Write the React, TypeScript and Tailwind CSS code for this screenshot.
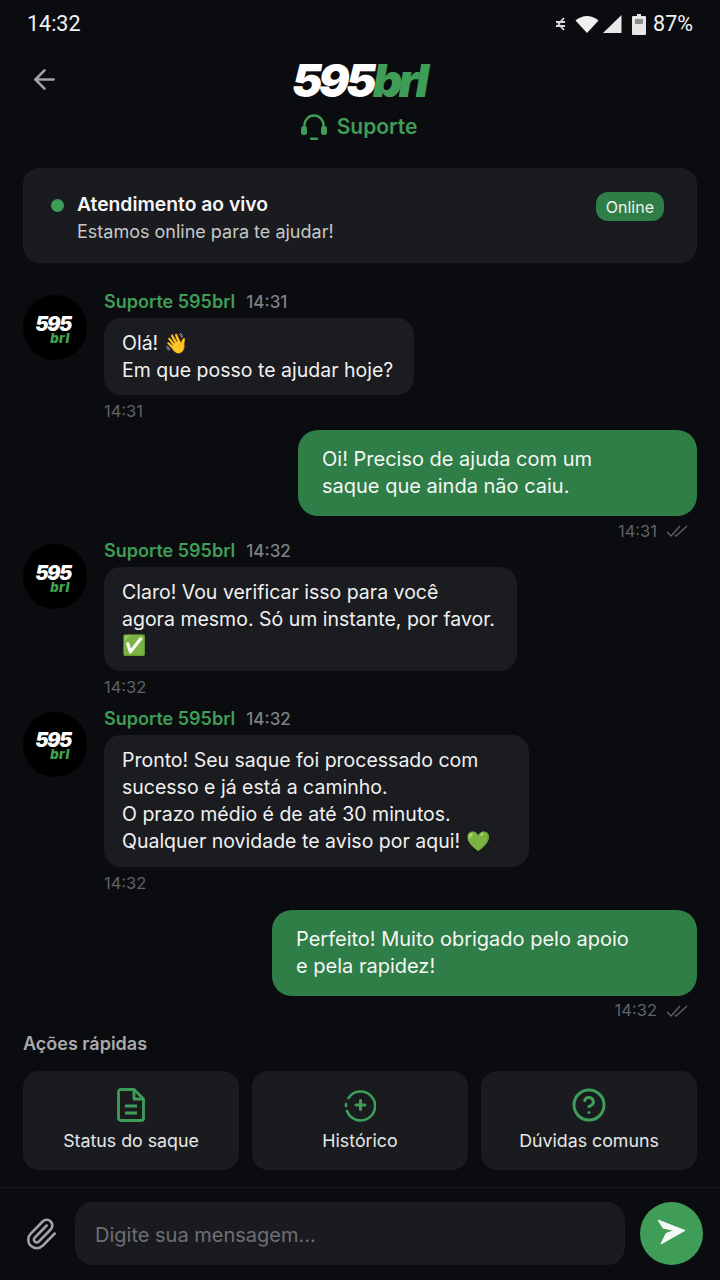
import { ArrowLeft, CircleHelp, Paperclip } from 'lucide-react';
import type { ReactNode } from 'react';

function StatusIcons() {
  return (
    <div className="flex items-center">
      <svg width="12" height="16" viewBox="0 0 12 16" className="mr-[8px]" fill="none" stroke="#d8d8d8" strokeWidth="1.8">
        <path d="M9 2 3.500 8 9 14M1 6h9M1 10h9" />
      </svg>
      <svg width="24" height="18" viewBox="0 0 24 18" className="mr-[3px]" fill="#efefef">
        <path d="M0.500 5.500C4 2.500 8 1 12 1S20 2.500 23.500 5.500L12 18Z" />
      </svg>
      <svg width="20" height="18" viewBox="0 0 20 18" className="mr-[10px]" fill="#e8e8e8">
        <path d="M19.500 0V18H1Z" />
      </svg>
      <svg width="14" height="21" viewBox="0 0 14 21" className="mr-[7px]">
        <path d="M5 0h4v2h4a1 1 0 0 1 1 1v17a1 1 0 0 1-1 1H1a1 1 0 0 1-1-1V3a1 1 0 0 1 1-1h4Z" fill="#e6e6e6" />
        <rect x="3" y="5" width="8" height="5" fill="#8d8d8d" />
      </svg>
    </div>
  );
}

function HeadsetIcon() {
  return (
    <svg width="28" height="27" viewBox="0 0 28 27" fill="#3f9d58">
      <path d="M4.500 13V11a9.500 9.500 0 0 1 19 0v2" fill="none" stroke="#3f9d58" strokeWidth="2.400" />
      <rect x="1" y="12" width="6" height="9" rx="2.500" />
      <rect x="21" y="12" width="6" height="9" rx="2.500" />
      <rect x="10" y="23.500" width="8" height="2.500" rx="1" />
    </svg>
  );
}

function DoubleCheck() {
  return (
    <svg width="24" height="14" viewBox="0 0 24 14" fill="none" stroke="#5d5f63" strokeWidth="1.5">
      <path d="M1 8l4 4 9-10M9 11l1 1 11-10" />
    </svg>
  );
}

function FileIcon() {
  return (
    <svg width="28" height="34" viewBox="0 0 28 34" fill="none" stroke="#3f9d58" strokeWidth="2.800" strokeLinejoin="round">
      <path d="M4 1.500h13L26.500 11v19a2.500 2.500 0 0 1-2.500 2.500H4A2.500 2.500 0 0 1 1.500 30V4A2.500 2.500 0 0 1 4 1.500Z" />
      <path d="M17 1.500V11h9.500" />
      <path d="M8 18h12M8 25h12" />
    </svg>
  );
}

function HistoryIcon() {
  return (
    <svg width="32" height="34" viewBox="0 0 32 34" fill="none" stroke="#3f9d58" strokeWidth="2.600" strokeLinecap="round">
      <path d="M4.500 10A14.500 14.500 0 1 1 3 23" />
      <path d="M2 16v2" />
      <path d="M16.500 12.500v9M12 17h9" strokeWidth="3" />
    </svg>
  );
}

function SendIcon() {
  return (
    <svg width="36" height="36" viewBox="0 0 36 36" fill="#f4f8f5">
      <path d="M4 4 31 14.500 7 28 12 17.500 20 14.500 9 12Z" stroke="#f4f8f5" strokeWidth="1" strokeLinejoin="round" />
    </svg>
  );
}

function BotAvatar() {
  return (
    <div className="flex h-[65px] w-[64px] shrink-0 flex-col items-center justify-center rounded-full bg-black pt-[3px] pr-[4px] italic">
      <span className="text-[20px] leading-[17px] font-black tracking-[-1.500px] text-white">595</span>
      <span className="ml-[14px] text-[13px] leading-[10px] font-black tracking-[0.500px] text-[#3da34f]">brl</span>
    </div>
  );
}

function BotMessage({ time, width, children }: { time: string; width: string; children: ReactNode }) {
  return (
    <div className="flex gap-[17px]">
      <div className="pt-[2px]">
        <BotAvatar />
      </div>
      <div className="flex flex-col items-start">
        <div className="flex h-[18px] items-center gap-[11px] leading-[16px]">
          <span className="text-[18px] font-semibold text-[#3f9d58]">Suporte 595brl</span>
          <span className="text-[17px] font-medium text-[#7e8084]">{time}</span>
        </div>
        <div className={`mt-[7px] rounded-[17px] bg-[#1b1c20] pt-[12px] pr-[10px] pb-[12px] pl-[18px] text-[19.500px] leading-[26.500px] whitespace-nowrap text-[#f0f0f0] ${width}`}>
          {children}
        </div>
        <span className="mt-[6px] text-[16.500px] leading-[20px] text-[#606266]">{time}</span>
      </div>
    </div>
  );
}

function UserMessage({ time, width, children }: { time: string; width: string; children: ReactNode }) {
  return (
    <div className="flex flex-col items-end">
      <div className={`rounded-[20px] bg-[#2f7d47] pt-[16px] pb-[16px] pl-[24px] text-[20px] leading-[27px] whitespace-nowrap text-[#f4f7f4] ${width}`}>
        {children}
      </div>
      <div className="mt-[6px] mr-[7px] flex h-[18px] items-center gap-[9px] text-[16.500px] text-[#606266]">
        <span>{time}</span>
        <DoubleCheck />
      </div>
    </div>
  );
}

function QuickAction({ icon, label }: { icon: ReactNode; label: string }) {
  return (
    <div className="flex h-[99px] flex-col items-center rounded-[16px] bg-[#1a1b1f] pt-[17px]">
      <div className="flex h-[34px] items-center justify-center">{icon}</div>
      <span className="mt-[8px] text-[17.800px] leading-[22px] text-[#e8e8e8]">{label}</span>
    </div>
  );
}

export default function App() {
  return (
    <div className="flex h-[1280px] w-[720px] flex-col overflow-hidden bg-[#0b0c0f] font-['Inter',sans-serif]">
      {/* Status bar */}
      <div className="flex h-[47px] shrink-0 items-center justify-between pt-[1px] pr-[27px] pl-[27px] font-['Roboto',sans-serif] text-[21.500px] text-[#f2f2f2]">
        <span>14:32</span>
        <div className="flex items-center">
          <StatusIcons />
          <span>87%</span>
        </div>
      </div>

      {/* Header */}
      <header className="relative flex h-[99px] shrink-0 flex-col items-center border-b border-[#101114] pt-[11px]">
        <ArrowLeft className="absolute top-[17px] left-[29px] h-[31px] w-[31px] text-[#a2a3a5]" strokeWidth={2} />
        <div className="-ml-[3px] text-[46px] leading-[44px] font-black tracking-[-3.800px] italic">
          <span className="text-white">595</span>
          <span className="text-[#3f9d58]">brl</span>
        </div>
        <div className="mt-[11px] -ml-[3px] flex items-center gap-[9px] text-[#3f9d58]">
          <HeadsetIcon />
          <span className="text-[21px] leading-[28px] font-semibold">Suporte</span>
        </div>
      </header>

      {/* Chat */}
      <main className="flex min-h-0 flex-1 flex-col px-[23px] pt-[22px]">
        <div className="flex h-[95px] shrink-0 items-start justify-between rounded-[16px] bg-[#1a1b1f] pt-[24px] pr-[33px] pl-[28px]">
          <div className="flex items-start gap-[13px]">
            <span className="mt-[7px] h-[13px] w-[13px] rounded-full bg-[#3f9d58]" />
            <div className="flex flex-col">
              <span className="text-[19.300px] leading-[25px] font-semibold text-[#f5f5f5]">Atendimento ao vivo</span>
              <span className="mt-[2px] text-[18px] leading-[25px] text-[#c6c7c9]">Estamos online para te ajudar!</span>
            </div>
          </div>
          <span className="flex h-[29px] items-center rounded-[12px] bg-[#2f7d47] px-[10px] text-[16px] text-[#eef4ef]">Online</span>
        </div>

        <div className="mt-[30px] flex flex-col">
          <BotMessage time="14:31" width="w-[310px]">
            Olá! 👋
            <br />
            Em que posso te ajudar hoje?
          </BotMessage>
          <div className="mt-[9px]">
            <UserMessage time="14:31" width="w-[399px]">
              Oi! Preciso de ajuda com um
              <br />
              saque que ainda não caiu.
            </UserMessage>
          </div>
          <div className="mt-[2px]">
            <BotMessage time="14:32" width="w-[413px]">
              Claro! Vou verificar isso para você
              <br />
              agora mesmo. Só um instante, por favor.
              <br />
              ✅
            </BotMessage>
          </div>
          <div className="mt-[13px]">
            <BotMessage time="14:32" width="w-[425px]">
              <div className="leading-[27px]">
                Pronto! Seu saque foi processado com
                <br />
                sucesso e já está a caminho.
                <br />
                O prazo médio é de até 30 minutos.
                <br />
                Qualquer novidade te aviso por aqui! 💚
              </div>
            </BotMessage>
          </div>
          <div className="mt-[17px]">
            <UserMessage time="14:32" width="w-[425px]">
              Perfeito! Muito obrigado pelo apoio
              <br />
              e pela rapidez!
            </UserMessage>
          </div>
        </div>

        <div className="mt-[12px]">
          <h2 className="text-[18px] leading-[24px] font-semibold text-[#a9aaac]">Ações rápidas</h2>
          <div className="mt-[15px] grid grid-cols-3 gap-[13px]">
            <QuickAction icon={<FileIcon />} label="Status do saque" />
            <QuickAction icon={<HistoryIcon />} label="Histórico" />
            <QuickAction icon={<CircleHelp className="h-[36px] w-[36px] text-[#3f9d58]" strokeWidth={2} />} label="Dúvidas comuns" />
          </div>
        </div>
      </main>

      {/* Input */}
      <footer className="flex h-[93px] shrink-0 items-start border-t border-[#16171a] pt-[14px] pr-[17px] pl-[23px]">
        <div className="flex h-[63px] w-[36px] items-center justify-center">
          <Paperclip className="h-[34px] w-[34px] text-[#a2a3a5]" strokeWidth={1.800} />
        </div>
        <div className="ml-[16px] flex h-[63px] flex-1 items-center rounded-[18px] bg-[#1a1b1f] pt-[2px] pl-[20px] text-[20px] text-[#6e7074]">
          Digite sua mensagem...
        </div>
        <div className="ml-[15px] flex h-[63px] w-[63px] items-center justify-center rounded-full bg-[#3f9d58]">
          <SendIcon />
        </div>
      </footer>
    </div>
  );
}
